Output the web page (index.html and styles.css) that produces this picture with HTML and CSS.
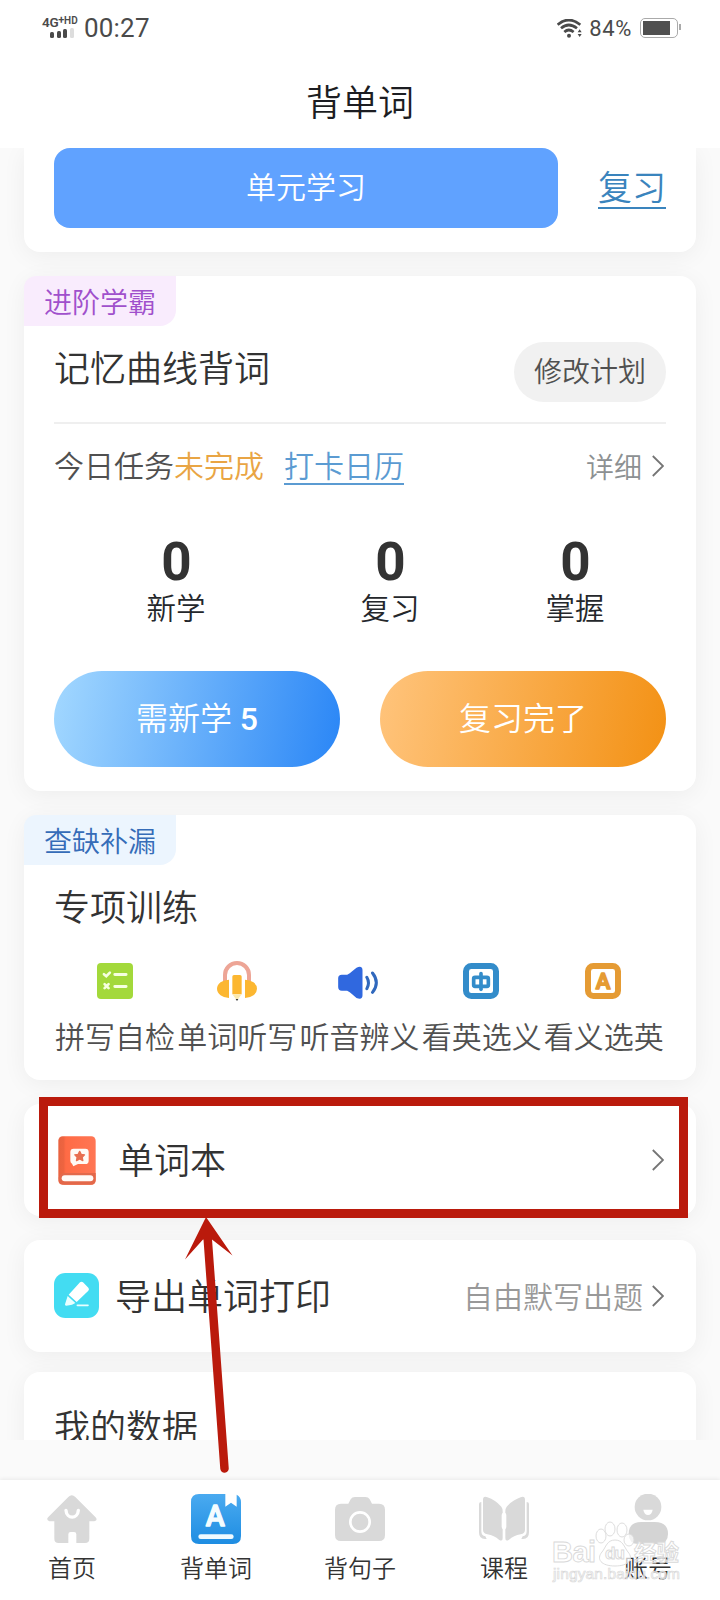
FILE: index.html
```html
<!DOCTYPE html>
<html lang="zh-CN">
<head>
<meta charset="utf-8">
<title>背单词</title>
<link rel="stylesheet" href="styles.css">
</head>
<body>
<div class="phone">
  <header class="statusbar">
    <div class="status-left">
      <div class="network">
        <div class="network-type"><span>4G</span><sup>+</sup><small>HD</small></div>
        <div class="bars"><i class="b1"></i><i class="b2"></i><i class="b3"></i><i class="b4"></i></div>
      </div>
      <span class="clock">00:27</span>
    </div>
    <div class="status-right">
      <svg class="wifi" viewBox="0 0 75 57" fill="none" stroke="#4a4a4a" stroke-width="8">
        <path d="M2 17Q35-11 70 17M12 28Q35 8 60 28M22 39Q35 27 50 39"/>
        <circle cx="36" cy="50" r="6" fill="#4a4a4a" stroke="none"/>
        <path d="M62 40l6-9 6 9zM62 45l6 9 6-9z" fill="#4a4a4a" stroke="none"/>
      </svg>
      <span class="percent">84%</span>
      <div class="battery"><i></i></div>
    </div>
  </header>
  <h1 class="page-title">背单词</h1>

  <main class="scroll">
    <section class="card unit">
      <button class="unit-button">单元学习</button>
      <a class="unit-review">复习</a>
    </section>

    <section class="card memory">
      <span class="tag tag-purple">进阶学霸</span>
      <div class="memory-head">
        <h2>记忆曲线背词</h2>
        <button class="pill">修改计划</button>
      </div>
      <div class="task">
        <span>今日任务</span><span class="todo">未完成</span><a class="calendar">打卡日历</a>
        <span class="detail">详细</span>
        <svg class="chevron" viewBox="0 0 12 22"><path d="M.8 1L11 11 .8 21"/></svg>
      </div>
      <div class="stats">
        <div class="stat"><b>0</b><span>新学</span></div>
        <div class="stat"><b>0</b><span>复习</span></div>
        <div class="stat"><b>0</b><span>掌握</span></div>
      </div>
      <div class="actions">
        <button class="action blue">需新学 <span class="count">5</span></button>
        <button class="action orange">复习完了</button>
      </div>
    </section>

    <section class="card training">
      <span class="tag tag-blue">查缺补漏</span>
      <h2>专项训练</h2>
      <div class="drills">
        <div class="drill">
          <div class="drill-icon"><svg width="36" height="36" viewBox="290 488 109 109">
            <rect x="290" y="488" width="109" height="109" rx="12" fill="#a3d93b"/>
            <path d="M344 523h34M344 559h34" stroke="#f6ffe0" stroke-width="9" stroke-linecap="round"/>
            <path d="M311 522l7 6 11-11M313 552l12 12M325 552l-12 12" fill="none" stroke="#f6ffe0" stroke-width="8" stroke-linecap="round"/>
          </svg></div>
          <span>拼写自检</span>
        </div>
        <div class="drill">
          <div class="drill-icon"><svg width="40" height="40" viewBox="651 483 120 120">
            <path d="M675 545V525a36 36 0 0 1 72 0v20" fill="none" stroke="#eda596" stroke-width="12"/>
            <path d="M687 539a36 27.500 0 0 0 0 55zM735 539a36 27.500 0 0 1 0 55z" fill="#fcb731"/>
            <path d="M697 583V530q0-5 5-5h18q5 0 5 5v53z" fill="#fcb731"/>
            <path d="M697 583h28l-11 15h-6z" fill="#fbe9ae"/>
            <path d="M707 597h8l-4 6z" fill="#333"/>
          </svg></div>
          <span>单词听写</span>
        </div>
        <div class="drill">
          <div class="drill-icon"><svg class="speaker" width="41" height="34" viewBox="1019 499 122 102">
            <path d="M1030 525h16q8-3 15-10l13-11q18-8 18 8v75q0 15-18 8l-13-11q-7-8-15-11h-16q-11 0-11-11v-26q0-11 11-11z" fill="#3068df"/>
            <path d="M1105 533q10 17 0 34M1122 520q23 29 0 58" fill="none" stroke="#3068bd" stroke-width="9" stroke-linecap="round"/>
          </svg></div>
          <span>听音辨义</span>
        </div>
        <div class="drill">
          <div class="drill-icon"><svg width="36" height="36" viewBox="309 489 108 108">
            <rect x="318" y="498" width="90" height="90" rx="16" fill="#fff" stroke="#338cca" stroke-width="18"/>
            <rect x="341" y="532" width="44" height="27" rx="4" fill="none" stroke="#338cca" stroke-width="11"/>
            <path d="M363 521v47" stroke="#338cca" stroke-width="11" stroke-linecap="round"/>
          </svg></div>
          <span>看英选义</span>
        </div>
        <div class="drill">
          <div class="drill-icon"><svg width="36" height="36" viewBox="678 489 108 108">
            <rect x="687" y="498" width="90" height="90" rx="16" fill="#fff" stroke="#e59b34" stroke-width="18"/>
            <text class="icon-letter" x="732" y="567" font-size="66" fill="#e59b34" stroke="#e59b34" stroke-width="5">A</text>
          </svg></div>
          <span>看义选英</span>
        </div>
      </div>
    </section>

    <section class="card row wordbook">
      <svg class="book" width="38" height="49" viewBox="0 0 114 147">
        <defs><linearGradient id="cover" x1="0" x2="1"><stop offset="0" stop-color="#e8623f"/><stop offset=".14" stop-color="#ee6440"/><stop offset=".2" stop-color="#ff6b45"/><stop offset="1" stop-color="#ff7654"/></linearGradient></defs>
        <rect x="1" y="1" width="112" height="145" rx="13" fill="url(#cover)"/>
        <path d="M2 125q5-14 20-14h91v20q0 15-15 15H20Q2 145 2 125z" fill="#e3684a"/>
        <rect x="11" y="118" width="95" height="18" rx="9" fill="#fffaf7"/>
        <path d="M47 38h35q10 0 10 10v26q0 10-10 10H60l-14 7-4-8q-5-3-5-9V48q0-10 10-10z" fill="#fffaf5"/>
        <path d="M65 46l4.500 9 10 1.500-7 7 2 10.500-9.500-5-9.500 5 2-10.500-7-7 10-1.500z" fill="#e86f50" stroke="#e86f50" stroke-width="4" stroke-linejoin="round"/>
      </svg>
      <h2>单词本</h2>
      <svg class="chevron" viewBox="0 0 12 22"><path d="M.8 1L11 11 .8 21"/></svg>
    </section>

    <section class="card row export">
      <svg width="45" height="45" viewBox="0 0 135 135">
        <rect width="135" height="135" rx="34" fill="#43dcf2"/>
        <path d="M78 28q5-4 9 0l16 16q4 4 0 9L68 87 44 65z" fill="#fff"/>
        <path d="M41 69l23 21-10 5-17 3q-6 0-3-7z" fill="#e9ffff"/>
        <path d="M70 97h32" stroke="#e9ffff" stroke-width="5" stroke-linecap="round"/>
      </svg>
      <h2>导出单词打印</h2>
      <span class="row-note">自由默写出题</span>
      <svg class="chevron" viewBox="0 0 12 22"><path d="M.8 1L11 11 .8 21"/></svg>
    </section>

    <section class="card data"><h2>我的数据</h2></section>
  </main>

  <nav class="tabs">
    <a class="tab">
      <svg width="50" height="50" viewBox="140 432 150 150">
        <path d="M162 514h-15q-11-5-3-13l60-60q10-10 21 0l60 60q9 9-3 13h-15v52q0 13-13 13h-26v-26q0-7-7-7h-10q-7 0-7 7v26h-29q-13 0-13-13z" fill="#d9d9d9"/>
        <path d="M197 481c2 27 35 27 37 0" fill="none" stroke="#fff" stroke-width="10" stroke-linecap="round"/>
      </svg>
      <span>首页</span>
    </a>
    <a class="tab">
      <svg width="50" height="50" viewBox="573 432 150 150">
        <defs><linearGradient id="active" x1="0" y1="0" x2="0" y2="1"><stop offset="0" stop-color="#4aaaf0"/><stop offset="1" stop-color="#1e8de2"/></linearGradient></defs>
        <path d="M597 432h79v38l17-12 17 12v-36q13 7 13 22v102q0 24-24 24h-102q-24 0-24-24V456q0-24 24-24z" fill="url(#active)"/>
        <text class="icon-letter" x="646" y="528" font-size="86" fill="#f4fcff" stroke="#f4fcff" stroke-width="4">A</text>
        <path d="M602 560h92" stroke="#effaff" stroke-width="14" stroke-linecap="round"/>
      </svg>
      <span>背单词</span>
    </a>
    <a class="tab">
      <svg width="50" height="50" viewBox="0 0 150 150">
        <path d="M18 29h22l7-13q4-7 13-7h31q9 0 13 7l7 13h21q18 0 18 18v76q0 18-18 18H18q-18 0-18-18V47q0-18 18-18z" fill="#d9d9d9"/>
        <circle cx="75" cy="84" r="29" fill="none" stroke="#fff" stroke-width="8"/>
      </svg>
      <span>背句子</span>
    </a>
    <a class="tab">
      <svg width="50" height="50" viewBox="357 432 150 150">
        <path d="M369 450q0-13 13-8 24 8 42 28 4 5 4 14v80q0 12-11 5-14-12-35-16-13-3-13-14zM495 450q0-13-13-8-24 8-42 28-4 5-4 14v80q0 12 11 5 14-12 35-16 13-3 13-14zM357 462q0-6 7-6v88q0 13 12 15l4 8q-23 3-23-20zM507 462q0-6-7-6v88q0 13-12 15l-4 8q23 3 23-20z" fill="#d9d9d9"/>
        <rect x="425" y="488" width="14" height="50" rx="7" fill="#fff"/>
      </svg>
      <span>课程</span>
    </a>
    <a class="tab">
      <svg width="50" height="50" viewBox="789 432 150 150">
        <circle cx="864" cy="471" r="40" fill="#d9d9d9"/>
        <path d="M850 479h28q-3 16-14 16t-14-16z" fill="#fff"/>
        <path d="M806 552q0-36 38-36h40q40 0 40 36 0 30-30 30h-58q-30 0-30-30z" fill="#d4d4d4"/>
      </svg>
      <span>账号</span>
    </a>
  </nav>

  <svg class="overlay" width="720" height="1600" viewBox="0 0 720 1600">
    <rect x="43.500" y="1101.500" width="640" height="112" fill="none" stroke="#ba1a0c" stroke-width="9"/>
    <path d="M207.500 1236L224.500 1468.500" stroke="#ba1a0c" stroke-width="8.500" stroke-linecap="round"/>
    <path d="M206 1217L232.500 1255.500 212 1239.500 203 1239.500 185 1259.500z" fill="#ba1a0c"/>
    <g class="mark">
      <text x="552" y="1562" font-size="29" textLength="44">Bai</text>
      <ellipse cx="601" cy="1536" rx="5" ry="7"/><ellipse cx="610" cy="1529" rx="5" ry="7"/>
      <ellipse cx="622" cy="1530" rx="5" ry="7"/><ellipse cx="629" cy="1540" rx="5" ry="6"/>
      <path d="M615 1540c8 0 9 7 13 12 6 7 1 14-13 14s-19-7-13-14c4-5 5-12 13-12z"/>
      <text x="605" y="1559" font-size="17" textLength="20">du</text>
      <text class="mark-cn" x="634" y="1561" font-size="22.500">经验</text>
      <text class="mark-url" x="553" y="1579" font-size="15.500" textLength="127">jingyan.baidu.com</text>
    </g>
  </svg>
</div>
</body>
</html>
```
FILE: styles.css
```css
* { box-sizing: border-box; }

body {
  margin: 0;
  background: #fff;
  font-family: Roboto, "Noto Sans CJK SC", sans-serif;
  color: #333;
}

h1, h2 { margin: 0; font-weight: 350; }
h2 { font-size: 36px; line-height: 48px; white-space: nowrap; }

button {
  display: block;
  border: 0;
  padding: 0;
  font-family: inherit;
  font-weight: 350;
}

svg { display: block; flex: none; }

.phone {
  position: relative;
  display: flex;
  flex-direction: column;
  width: 720px;
  height: 1600px;
  overflow: hidden;
  background: #fafafa;
  font-weight: 350;
}

/* Status bar */
.statusbar {
  display: flex;
  justify-content: space-between;
  height: 60px;
  padding: 0 40px 0 42px;
  background: #fff;
  color: #4a4a4a;
}
.status-left, .status-right { display: flex; }
.network { width: 42px; padding-top: 15px; }
.network-type { display: flex; height: 13px; font-size: 13.500px; font-weight: 600; line-height: 15px; letter-spacing: -.3px; }
.network-type sup { font-size: 11px; line-height: 9px; }
.network-type small { font-size: 10px; line-height: 11px; letter-spacing: 0; }
.bars { display: flex; align-items: flex-end; gap: 2.500px; height: 10px; padding-left: 8px; }
.bars i { width: 4px; border-radius: 1.500px; background: #4a4a4a; }
.b1 { height: 6px; }
.b2 { height: 7px; }
.b3 { height: 9px; }
.bars .b4 { height: 10px; background: #ddd; }
.clock { font-size: 26px; line-height: 56px; font-weight: 400; letter-spacing: .2px; }
.wifi { width: 25px; height: 19px; margin: 19px 7px 0 0; }
.percent { font-size: 22px; line-height: 57px; font-weight: 400; letter-spacing: .6px; }
.battery {
  position: relative;
  width: 38px;
  height: 20px;
  margin: 18px 2px 0 8px;
  padding: 2px;
  border: 1.500px solid #aaa;
  border-radius: 5px;
}
.battery i { display: block; width: 27px; height: 14px; background: #505050; }
.battery::after {
  content: "";
  position: absolute;
  right: -4px;
  top: 5px;
  width: 2px;
  height: 6px;
  background: #aaa;
}

.page-title {
  height: 88px;
  background: #fff;
  color: #1c1d22;
  font-size: 36px;
  line-height: 88px;
  text-align: center;
}

/* Scrolling content */
.scroll {
  display: flex;
  flex-direction: column;
  flex: none;
  gap: 24px;
  height: 1292px;
  padding: 0 24px;
  overflow: hidden;
}
.card {
  flex: none;
  padding: 0 30px;
  border-radius: 16px;
  background: #fff;
  box-shadow: 0 4px 24px rgba(0, 0, 0, .055);
}

.unit {
  display: flex;
  justify-content: space-between;
  height: 104px;
  border-radius: 0 0 16px 16px;
}
.unit-button {
  width: 504px;
  height: 80px;
  border-radius: 16px;
  background: #60a2ff;
  color: #fff;
  font-size: 30px;
  line-height: 78px;
}
.unit-review {
  align-self: flex-start;
  margin-top: 18px;
  height: 43px;
  border-bottom: 2px solid #3a84bd;
  color: #3a84bd;
  font-size: 34px;
  line-height: 45px;
}

.tag {
  display: block;
  width: 152px;
  height: 50px;
  margin-left: -30px;
  padding-left: 20px;
  border-radius: 12px 0 16px 0;
  font-size: 28px;
  line-height: 55px;
}
.tag-purple { background: #f9ecfd; color: #a050cc; }
.tag-blue { background: #ecf5fe; color: #356cb8; }

.memory { height: 515px; }
.memory-head {
  display: flex;
  justify-content: space-between;
  height: 98px;
  padding-top: 16px;
  border-bottom: 2px solid #efefef;
}
.memory-head h2 { margin-top: 4px; }
.pill {
  width: 152px;
  height: 60px;
  border-radius: 30px;
  background: #f1f1f1;
  color: #505050;
  font-size: 28px;
  line-height: 59px;
}
.task {
  display: flex;
  align-items: flex-start;
  height: 84px;
  padding-top: 20px;
  color: #505050;
  font-size: 30px;
  line-height: 46px;
}
.todo { color: #e9a544; }
.calendar {
  height: 41px;
  margin-left: 20px;
  border-bottom: 2px solid #5b9bd2;
  color: #5b9bd2;
}
.detail { margin-left: auto; color: #8c9092; font-size: 28px; line-height: 49px; }
.chevron {
  width: 12px;
  height: 22px;
  margin: 11px 2px 0 10px;
  fill: none;
  stroke: #757575;
  stroke-width: 1.800;
}
.stats { display: flex; justify-content: space-between; height: 163px; padding: 29px 61px 0 92px; }
.stat { display: flex; flex-direction: column; align-items: center; width: 60px; }
.stat:nth-child(2) { margin-left: 29px; }
.stat b { padding-left: 1px; font-size: 53px; line-height: 51px; font-weight: 700; color: #333; }
.stat span { margin-top: -3px; font-size: 29.500px; line-height: 48px; color: #24272b; }
.actions { display: flex; justify-content: space-between; }
.action {
  width: 286px;
  height: 96px;
  border-radius: 48px;
  color: #fff;
  font-size: 32px;
  line-height: 94px;
}
.count { font-weight: 500; }
.blue { background: linear-gradient(100deg, #a3d8ff, #2a86f6); }
.orange { background: linear-gradient(100deg, #ffc47c, #f39114); }

.training { height: 265px; }
.training h2 { margin-top: 20px; }
.drills { display: flex; margin-top: 26px; }
.drill { display: flex; flex-direction: column; align-items: center; width: 122.200px; color: #505050; font-size: 30px; line-height: 44px; white-space: nowrap; }
.drill-icon { display: flex; align-items: center; justify-content: center; height: 44px; padding-right: 1px; }
.speaker { margin-top: 3px; }
.drill span { margin-top: 13px; }

.row { display: flex; align-items: center; height: 112px; }
.wordbook { padding-left: 34px; }
.wordbook h2 { margin-left: 22px; padding-top: 4px; }
.wordbook .chevron { margin: 0 2px 1px auto; }
.export svg { margin-bottom: 1px; }
.export h2 { margin-left: 16px; padding-top: 3px; }
.row-note { margin-left: auto; padding-bottom: 3px; color: #999; font-size: 30px; }
.export .chevron { margin: 0 2px 1px 9px; }
.data { height: 160px; margin-top: -4px; padding-top: 33px; }

/* Bottom tab bar */
.tabs {
  display: flex;
  height: 120px;
  margin-top: 40px;
  background: #fff;
  box-shadow: 0 -1px 4px rgba(0, 0, 0, .07);
}
.tab {
  display: flex;
  flex-direction: column;
  align-items: center;
  width: 144px;
  padding-top: 14px;
  font-size: 24px;
  line-height: 34px;
}
.tab span { margin-top: 8px; }
.icon-letter { font-family: Roboto, sans-serif; font-weight: 500; text-anchor: middle; stroke-linejoin: round; }

/* Highlight frame, arrow and watermark above the page */
.overlay { position: absolute; left: 0; top: 0; }
.mark {
  fill: rgba(255, 255, 255, .7);
  stroke: #d9d9d9;
  stroke-width: .9;
  font-family: "Liberation Sans", sans-serif;
  font-weight: 700;
}
.mark-cn { font-family: "Noto Sans CJK SC", sans-serif; }
.mark-url { font-weight: 400; stroke-width: .7; }
```
